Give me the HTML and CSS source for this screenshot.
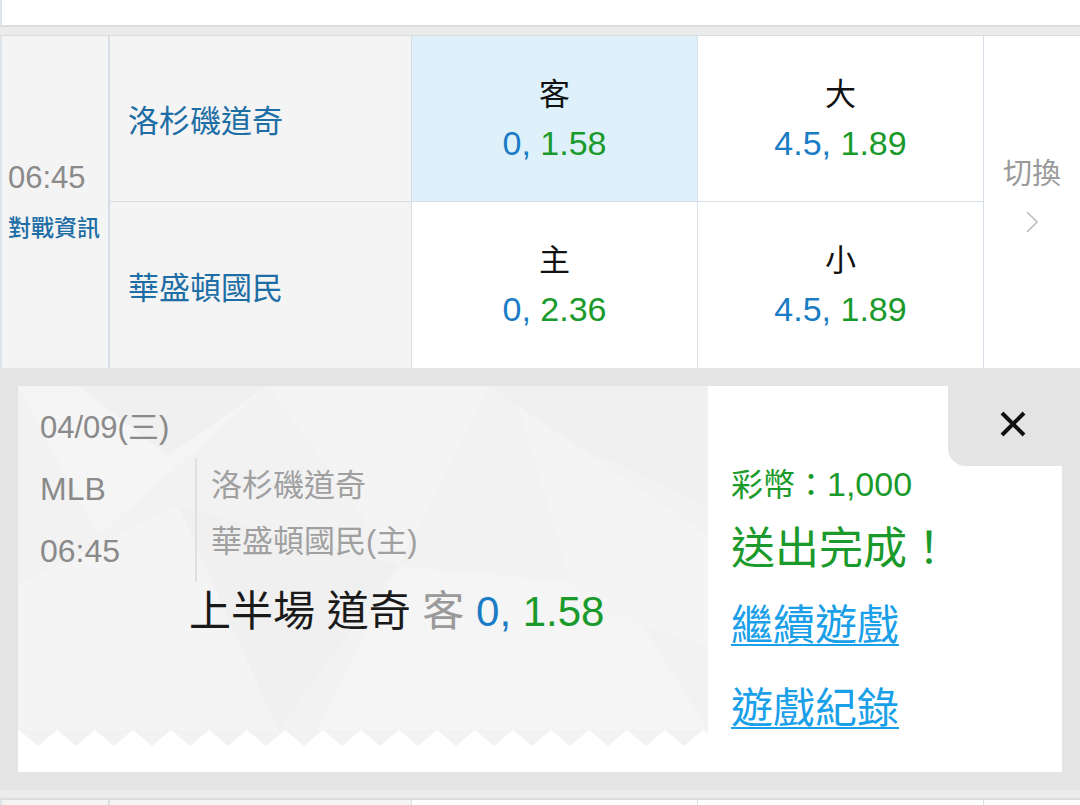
FILE: index.html
```html
<!DOCTYPE html>
<html lang="zh-Hant">
<head>
  <meta charset="UTF-8" />
  <meta name="viewport" content="width=device-width, initial-scale=1.0"/>
  <title>投注單</title>
  <link rel="stylesheet" href="styles.css">
</head>
<body>

<div class="prev-row"></div>
<div class="row-gap"></div>

<div class="match">
  <div class="time-cell">
    <span class="kickoff">06:45</span>
    <a class="info-link">對戰資訊</a>
  </div>
  <div class="team-cell top">洛杉磯道奇</div>
  <div class="odd-cell top selected">
    <span class="odd-label">客</span>
    <span class="odd-value"><span class="line">0,</span> <span class="price">1.58</span></span>
  </div>
  <div class="odd-cell top">
    <span class="odd-label">大</span>
    <span class="odd-value"><span class="line">4.5,</span> <span class="price">1.89</span></span>
  </div>
  <div class="switch-cell">
    <span>切換</span>
    <svg class="chevron" width="14" height="24" viewBox="0 0 14 24">
      <polyline points="2,2 12,12 2,22" fill="none" stroke="#bdbdbd" stroke-width="1.6"/>
    </svg>
  </div>
  <div class="team-cell">華盛頓國民</div>
  <div class="odd-cell">
    <span class="odd-label">主</span>
    <span class="odd-value"><span class="line">0,</span> <span class="price">2.36</span></span>
  </div>
  <div class="odd-cell">
    <span class="odd-label">小</span>
    <span class="odd-value"><span class="line">4.5,</span> <span class="price">1.89</span></span>
  </div>
</div>

<div class="ticket-wrap">
  <div class="ticket">
    <div class="ticket-main">
      <div class="ticket-body">
        <svg class="ticket-bg" width="690" height="344" viewBox="0 0 690 344">
          <polygon points="0,0 250,0 80,150" fill="#f5f5f5"/>
          <polygon points="60,0 250,0 150,70" fill="#f0f0f0"/>
          <polygon points="250,0 470,0 380,180" fill="#f4f4f4"/>
          <polygon points="470,0 690,0 690,120 560,60" fill="#f0f0f0"/>
          <polygon points="0,200 160,120 260,344 0,344" fill="#f4f4f4"/>
          <polygon points="380,180 600,200 690,344 300,344" fill="#f5f5f5"/>
          <polygon points="500,20 690,150 690,260 560,220" fill="#f4f4f4"/>
          <polygon points="160,120 380,180 260,344" fill="#f0f0f0"/>
        </svg>
        <div class="ticket-date">04/09(三)</div>
        <div class="ticket-match">
          <div class="ticket-meta">
            <div>MLB</div>
            <div>06:45</div>
          </div>
          <div class="ticket-teams">
            <div>洛杉磯道奇</div>
            <div>華盛頓國民(主)</div>
          </div>
        </div>
        <div class="ticket-bet">
          上半場 道奇 <span class="side">客</span> <span class="line">0,</span> <span class="price">1.58</span>
        </div>
      </div>
      <svg class="zigzag" width="690" height="16">
        <defs>
          <pattern id="zz" x="-18" y="0" width="38" height="16" patternUnits="userSpaceOnUse">
            <polygon points="0,16 19,0 38,16" fill="#fff"/>
          </pattern>
        </defs>
        <rect width="690" height="16" fill="url(#zz)"/>
      </svg>
    </div>
    <div class="ticket-side">
      <div class="coin">彩幣：<span class="amount">1,000</span></div>
      <div class="done">送出完成！</div>
      <div class="links">
        <a class="ticket-link">繼續遊戲</a>
        <a class="ticket-link">遊戲紀錄</a>
      </div>
    </div>
    <button class="close-btn">
      <svg width="28" height="28" viewBox="0 0 28 28">
        <line x1="3" y1="3" x2="25" y2="25" stroke="#111" stroke-width="4"/>
        <line x1="25" y1="3" x2="3" y2="25" stroke="#111" stroke-width="4"/>
      </svg>
    </button>
  </div>
</div>

<div class="row-gap"></div>

<div class="match next">
  <div class="time-cell"></div>
  <div class="team-cell top"></div>
  <div class="odd-cell top"></div>
  <div class="odd-cell top"></div>
  <div class="switch-cell"></div>
</div>

</body>
</html>
```

FILE: styles.css
```css
:root {
  --page-gray: #e4e4e4;
  --gap-gray: #ebebeb;
  --cell-gray: #f4f4f4;
  --cell-border: #d6dfe7;
  --selected: #def1fb;
  --team-blue: #1e6ea6;
  --line-blue: #1a7cc4;
  --price-green: #1a9a2a;
  --link-blue: #1aa0e8;
  --muted: #8a8a8a;
}

* {
  margin: 0;
  padding: 0;
  box-sizing: border-box;
  font-family: 'Liberation Sans', 'Noto Sans CJK TC', sans-serif;
}

body {
  background-color: var(--page-gray);
  width: 1080px;
  height: 805px;
  overflow: hidden;
  color: #222;
}

.prev-row {
  height: 27px;
  background-color: #fff;
  border-left: 2px solid #dde5ec;
  border-bottom: 2px solid #dcdcdc;
}

.row-gap {
  height: 8px;
  background-color: var(--gap-gray);
}

.match {
  display: grid;
  grid-template-columns: 108px 302px 286px 286px 1fr;
  grid-template-rows: 166px 166px;
  background-color: #fff;
  border-left: 2px solid #dde5ec;
  border-top: 1px solid #dcdcdc;
}

.time-cell {
  grid-row: span 2;
  background-color: var(--cell-gray);
  border-right: 2px solid var(--cell-border);
  display: flex;
  flex-direction: column;
  justify-content: center;
  padding-left: 6px;
  padding-top: 2px;
}

.kickoff {
  font-size: 31px;
  line-height: 50px;
  color: var(--muted);
}

.info-link {
  font-size: 23px;
  line-height: 50px;
  color: var(--team-blue);
  font-weight: 500;
}

.team-cell {
  background-color: var(--cell-gray);
  border-right: 1px solid var(--cell-border);
  display: flex;
  align-items: center;
  padding-left: 18px;
  font-size: 31px;
  color: var(--team-blue);
}

.team-cell.top,
.odd-cell.top {
  border-bottom: 1px solid var(--cell-border);
}

.odd-cell {
  border-right: 1px solid var(--cell-border);
  display: flex;
  flex-direction: column;
  align-items: center;
  justify-content: center;
}

.odd-cell.selected {
  background-color: var(--selected);
}

.odd-label {
  font-size: 31px;
  line-height: 48px;
  color: #111;
}

.odd-value {
  font-size: 34px;
  line-height: 48px;
}

.line {
  color: var(--line-blue);
}

.price {
  color: var(--price-green);
}

.switch-cell {
  grid-row: 1 / span 2;
  grid-column: 5;
  display: flex;
  flex-direction: column;
  align-items: center;
  justify-content: center;
  gap: 18px;
  padding-bottom: 20px;
  font-size: 29px;
  color: #9a9a9a;
}

.ticket-wrap {
  padding: 18px;
}

.ticket {
  position: relative;
  display: flex;
  height: 386px;
  background-color: #fff;
}

.ticket-main {
  width: 690px;
  display: flex;
  flex-direction: column;
}

.ticket-body {
  position: relative;
  height: 344px;
  background-color: #f2f2f2;
  padding: 22px 0 0 22px;
}

.ticket-bg {
  position: absolute;
  top: 0;
  left: 0;
}

.ticket-date,
.ticket-match,
.ticket-bet {
  position: relative;
}

.ticket-date {
  font-size: 31px;
  line-height: 40px;
  color: var(--muted);
  margin-bottom: 10px;
}

.ticket-match {
  display: flex;
}

.ticket-meta {
  width: 155px;
  font-size: 32px;
  line-height: 62px;
  color: var(--muted);
}

.ticket-teams {
  border-left: 2px solid #e0e0e0;
  padding-left: 14px;
  font-size: 31px;
  line-height: 56px;
  color: #a0a0a0;
}

.ticket-bet {
  padding-left: 149px;
  font-size: 42px;
  line-height: 60px;
  color: #1a1a1a;
}

.ticket-bet .side {
  color: #9a9a9a;
}

.zigzag {
  display: block;
  background-color: #f2f2f2;
}

.ticket-side {
  flex: 1;
  padding: 73px 0 0 23px;
  color: var(--price-green);
}

.coin {
  font-size: 32px;
  line-height: 50px;
}

.coin .amount {
  font-size: 34px;
}

.done {
  margin-top: 8px;
  font-size: 44px;
  line-height: 62px;
}

.links {
  display: flex;
  flex-direction: column;
  align-items: flex-start;
  gap: 23px;
  margin-top: 16px;
}

.ticket-link {
  font-size: 42px;
  line-height: 60px;
  color: var(--link-blue);
  text-decoration: underline;
  text-decoration-thickness: 2px;
  text-underline-offset: 4px;
  cursor: pointer;
}

.close-btn {
  position: absolute;
  top: 0;
  right: 0;
  width: 114px;
  height: 80px;
  border: none;
  background-color: var(--page-gray);
  border-bottom-left-radius: 18px;
  display: flex;
  align-items: center;
  justify-content: center;
  padding: 0 0 4px 16px;
  cursor: pointer;
}

.match.next {
  grid-template-rows: 20px;
  border-top: 2px solid #dcdcdc;
}

.match.next .time-cell,
.match.next .switch-cell {
  grid-row: auto;
}
```
